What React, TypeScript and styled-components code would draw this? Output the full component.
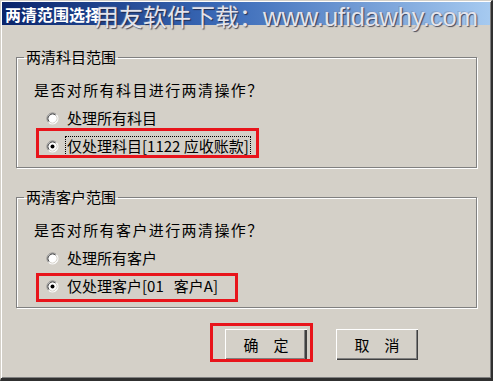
import React from 'react'
import styled, { createGlobalStyle } from 'styled-components'

const GlobalStyle = createGlobalStyle`
  body {
    margin: 0;
    background: #ffffff;
    font-family: "Noto Sans CJK SC", "Noto Sans", sans-serif;
  }
`

const Radio = ({ checked }: { checked?: boolean }) => (
  <RadioIcon width="13" height="13" viewBox="0 0 13 13">
    <circle cx="6.5" cy="6.5" r="5.5" fill="#ffffff" />
    <path d="M2.61 10.39 A5.5 5.5 0 0 1 10.39 2.61" stroke="#808080" fill="none" />
    <path d="M10.39 2.61 A5.5 5.5 0 0 1 2.61 10.39" stroke="#ffffff" fill="none" />
    <path d="M3.32 9.68 A4.5 4.5 0 0 1 9.68 3.32" stroke="#404040" fill="none" />
    <path d="M9.68 3.32 A4.5 4.5 0 0 1 3.32 9.68" stroke="#d4d0c8" fill="none" />
    {checked && <circle cx="6.5" cy="6.5" r="2" fill="#000000" />}
  </RadioIcon>
)

const App = () => {
  return (
    <>
      <GlobalStyle />
      <Window>
        <TitleBar>
          <Title>两清范围选择</Title>
        </TitleBar>
        <Watermark>
          <WmCn>用友软件下载：</WmCn>
          <WmEn>www.ufidawhy.com</WmEn>
        </Watermark>

        <Body>
          <Group>
            <Legend>两清科目范围</Legend>
            <Question>是否对所有科目进行两清操作？</Question>
            <Option>
              <Radio />
              <OptionText>处理所有科目</OptionText>
            </Option>
            <Option>
              <Radio checked />
              <OptionText $focus>仅处理科目[1122 应收账款]</OptionText>
              <Highlight $top={-8} $left={-10} $width={223} $height={30} />
            </Option>
          </Group>

          <Group $gap={20}>
            <Legend>两清客户范围</Legend>
            <Question>是否对所有客户进行两清操作？</Question>
            <Option>
              <Radio />
              <OptionText>处理所有客户</OptionText>
            </Option>
            <Option>
              <Radio checked />
              <OptionText>仅处理客户[01   客户A]</OptionText>
              <Highlight $top={-3} $left={-10} $width={202} $height={29} />
            </Option>
          </Group>

          <Buttons>
            <ButtonWrap>
              <Button $default>确　定</Button>
              <Highlight $top={-6} $left={-15} $width={103} $height={39} />
            </ButtonWrap>
            <Button>取　消</Button>
          </Buttons>
        </Body>
      </Window>
    </>
  )
}

export default App

const Window = styled.div`
  position: relative;
  box-sizing: border-box;
  width: 493px;
  height: 381px;
  background: #d4d0c8;
  border-top: 1px solid #d4d0c8;
  border-left: 1px solid #d4d0c8;
  border-right: 2px solid #303030;
  border-bottom: 3px solid #303030;
  box-shadow: inset 1px 1px 0 #ffffff, inset -1px -1px 0 #808080;
  padding: 1px 1px 0 1px;
  display: flex;
  flex-direction: column;
`

const TitleBar = styled.div`
  height: 23px;
  display: flex;
  align-items: center;
  padding-left: 3px;
  background: linear-gradient(to right, #0a246a 0%, #3a6ab8 45%, #a6caf0 100%);
`

const Title = styled.div`
  color: #ffffff;
  font-size: 16px;
  font-weight: bold;
  line-height: 20px;
`

const Watermark = styled.div`
  position: absolute;
  left: 94px;
  top: 1px;
  display: flex;
  align-items: baseline;
  white-space: nowrap;
  color: #e4e4ec;
  text-shadow: 1px 1px 1px rgba(30, 30, 50, 0.75), -1px -1px 0 rgba(120, 130, 160, 0.35);
  pointer-events: none;
`

const WmCn = styled.span`
  font-family: "Noto Sans CJK SC", sans-serif;
  font-size: 24px;
  line-height: 28px;
`

const WmEn = styled.span`
  font-family: "Liberation Sans", Arial, sans-serif;
  font-size: 25.5px;
  line-height: 28px;
`

const Body = styled.div`
  flex: 1;
  display: flex;
  flex-direction: column;
  padding: 0 13px 0 14px;
`

const Group = styled.fieldset<{ $gap?: number }>`
  margin: ${p => p.$gap ?? 23}px 0 0 0;
  padding: 0 0 11px 0;
  border: 1px solid #808080;
  box-shadow: inset 1px 1px 0 #ffffff, 1px 1px 0 #ffffff;
  min-width: 0;
`

const Legend = styled.legend`
  margin-left: 7px;
  padding: 0 2px;
  font-size: 15px;
  line-height: 18px;
  color: #000000;
`

const Question = styled.div`
  margin: 14px 0 0 17px;
  font-size: 15px;
  line-height: 20px;
  letter-spacing: 1.4px;
  color: #000000;
`

const Option = styled.div`
  position: relative;
  display: flex;
  align-items: center;
  width: fit-content;
  height: 20px;
  margin: 8px 0 0 29px;
  gap: 6px;
`

const RadioIcon = styled.svg`
  flex: none;
  display: block;
`

const OptionText = styled.span<{ $focus?: boolean }>`
  font-size: 15px;
  line-height: 18px;
  color: #000000;
  white-space: pre;
  padding: 0 1px;
  border: 1px ${p => (p.$focus ? 'dotted #000000' : 'solid transparent')};
`

const Highlight = styled.div<{ $top: number; $left: number; $width: number; $height: number }>`
  position: absolute;
  top: ${p => p.$top}px;
  left: ${p => p.$left}px;
  width: ${p => p.$width}px;
  height: ${p => p.$height}px;
  box-sizing: border-box;
  border: 3px solid #e8141b;
  pointer-events: none;
`

const Buttons = styled.div`
  display: flex;
  justify-content: flex-end;
  gap: 29px;
  margin-top: 21px;
  padding-right: 59px;
`

const ButtonWrap = styled.div`
  position: relative;
`

const Button = styled.button<{ $default?: boolean }>`
  width: 82px;
  height: 31px;
  padding: 0;
  background: #d4d0c8;
  font-family: "Noto Sans CJK SC", sans-serif;
  font-size: 15px;
  color: #000000;
  border: none;
  box-shadow: inset 1px 1px 0 #ffffff, inset -1px -1px 0 #404040, inset -2px -2px 0 #808080;
  ${p => p.$default && 'box-shadow: inset 1px 1px 0 #ffffff, inset -2px -1px 0 #404040, inset -3px -2px 0 #808080;'}
  cursor: pointer;
`
